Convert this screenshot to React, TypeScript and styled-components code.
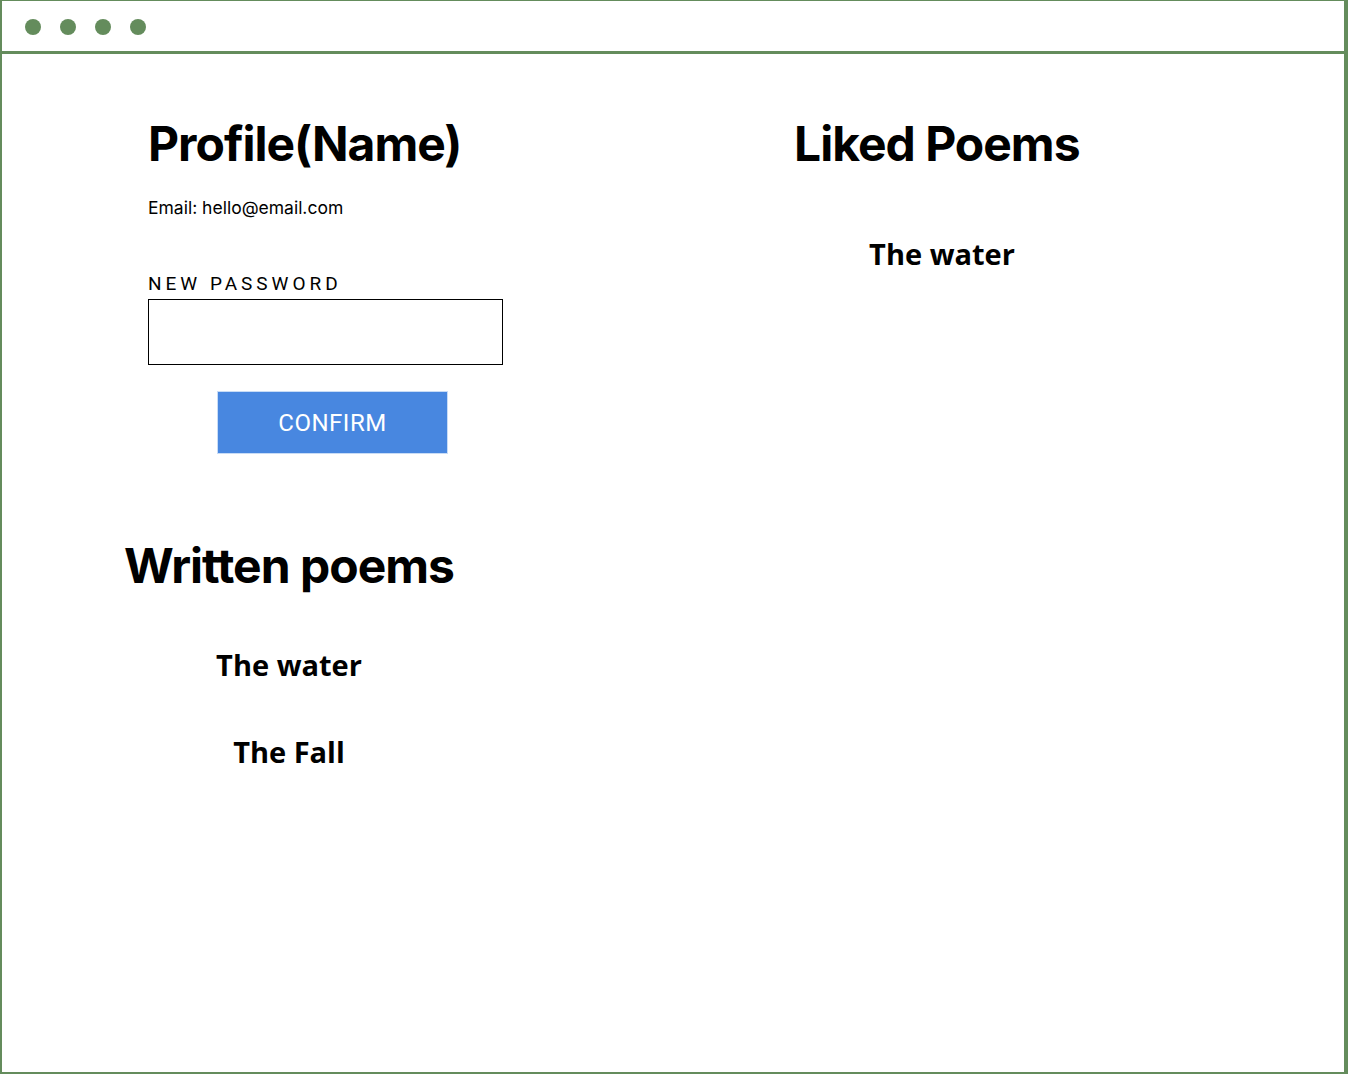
import React from "react";
import styled, { createGlobalStyle } from "styled-components";

const Global = createGlobalStyle`
  html, body { margin: 0; padding: 0; background: #fff; }
  body { font-family: Inter, "Noto Sans", sans-serif; color: #000; }
  * { box-sizing: border-box; }
`;

const Frame = styled.div`
  width: 1348px;
  height: 1074px;
  border-top: 1px solid #648c5c;
  border-left: 2px solid #648c5c;
  border-right: 4px solid #648c5c;
  border-bottom: 2px solid #648c5c;
  display: flex;
  flex-direction: column;
`;

const TitleBar = styled.div`
  height: 53px;
  border-bottom: 3px solid #648c5c;
  display: flex;
  align-items: center;
  gap: 19px;
  padding-left: 23px;
  padding-top: 2px;
`;

const Dot = styled.span`
  width: 16px;
  height: 16px;
  border-radius: 50%;
  background: #648c5c;
`;

const Content = styled.div`
  display: grid;
  grid-template-columns: 792px 1fr;
  flex: 1;
`;

const LeftColumn = styled.div`
  display: flex;
  flex-direction: column;
`;

const ProfileSection = styled.section`
  padding-left: 146px;
  padding-top: 60px;
  display: flex;
  flex-direction: column;
  width: 502px;
`;

const Heading = styled.h1`
  margin: 0;
  font-family: Inter, sans-serif;
  font-weight: 700;
  font-size: 48px;
  line-height: 60px;
  letter-spacing: -1px;
  white-space: nowrap;
`;

const Email = styled.p`
  margin: 23px 0 0;
  font-family: Inter, sans-serif;
  font-size: 17.5px;
  line-height: 22px;
`;

const Label = styled.label`
  margin-top: 54px;
  font-family: Roboto, sans-serif;
  font-size: 19px;
  letter-spacing: 4px;
  line-height: 22px;
`;

const PasswordInput = styled.input`
  margin-top: 4px;
  width: 355px;
  height: 66px;
  border: 1px solid #000;
  border-radius: 0;
  outline: none;
  padding: 0 10px;
  font-size: 16px;
`;

const ConfirmButton = styled.button`
  margin: 26px 0 0 69px;
  width: 231px;
  height: 63px;
  border: 1px solid #c8dcf6;
  background: #4887e0;
  color: #fff;
  font-family: Roboto, sans-serif;
  font-size: 24px;
  letter-spacing: 0.5px;
  cursor: pointer;
`;

const WrittenSection = styled.section`
  padding-left: 122px;
  padding-top: 82px;
  display: flex;
  flex-direction: column;
`;

const PoemList = styled.ul<{ $width: number }>`
  list-style: none;
  margin: 0;
  padding: 0;
  width: ${(p) => p.$width}px;
  display: flex;
  flex-direction: column;
  align-items: center;
  gap: 47px;
`;

const PoemItem = styled.li`
  font-family: "Open Sans", sans-serif;
  font-weight: 700;
  font-size: 29px;
  line-height: 40px;
`;

const RightColumn = styled.section`
  padding-top: 60px;
  display: flex;
  flex-direction: column;
`;

const WrittenList = styled(PoemList)`
  margin-top: 49px;
`;

const LikedList = styled(PoemList)`
  margin-top: 60px;
`;

export default function App() {
  return (
    <>
      <Global />
      <Frame>
        <TitleBar>
          <Dot />
          <Dot />
          <Dot />
          <Dot />
        </TitleBar>
        <Content>
          <LeftColumn>
            <ProfileSection>
              <Heading>Profile(Name)</Heading>
              <Email>Email: hello@email.com</Email>
              <Label htmlFor="pw">NEW PASSWORD</Label>
              <PasswordInput id="pw" type="password" />
              <ConfirmButton>CONFIRM</ConfirmButton>
            </ProfileSection>
            <WrittenSection>
              <Heading>Written poems</Heading>
              <WrittenList $width={330}>
                <PoemItem>The water</PoemItem>
                <PoemItem>The Fall</PoemItem>
              </WrittenList>
            </WrittenSection>
          </LeftColumn>
          <RightColumn>
            <Heading>Liked Poems</Heading>
            <LikedList $width={296}>
              <PoemItem>The water</PoemItem>
            </LikedList>
          </RightColumn>
        </Content>
      </Frame>
    </>
  );
}
